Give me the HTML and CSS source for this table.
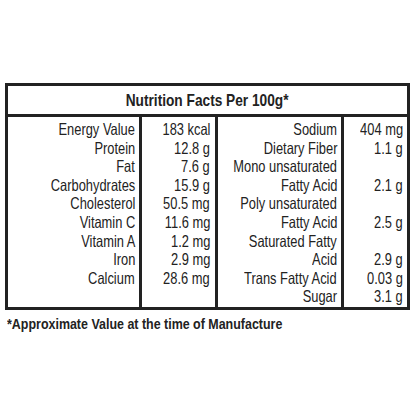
FILE: index.html
```html
<!DOCTYPE html>
<html lang="en">

<head>
    <meta charset="UTF-8">
    <meta name="viewport" content="width=device-width, initial-scale=1.0">
    <title>Nutrition Facts</title>
    <link rel="stylesheet" href="styles.css">
</head>

<body>
    <div class="label">
        <table class="facts">
            <colgroup>
                <col class="c1">
                <col class="c2">
                <col class="c3">
                <col class="c4">
            </colgroup>
            <thead>
                <tr>
                    <th colspan="4"><span>Nutrition Facts Per 100g*</span></th>
                </tr>
            </thead>
            <tbody>
                <tr><td><span>Energy Value</span></td><td><span>183 kcal</span></td><td><span>Sodium</span></td><td><span>404 mg</span></td></tr>
                <tr><td><span>Protein</span></td><td><span>12.8 g</span></td><td><span>Dietary Fiber</span></td><td><span>1.1 g</span></td></tr>
                <tr><td><span>Fat</span></td><td><span>7.6 g</span></td><td><span>Mono unsaturated</span></td><td></td></tr>
                <tr><td><span>Carbohydrates</span></td><td><span>15.9 g</span></td><td><span>Fatty Acid</span></td><td><span>2.1 g</span></td></tr>
                <tr><td><span>Cholesterol</span></td><td><span>50.5 mg</span></td><td><span>Poly unsaturated</span></td><td></td></tr>
                <tr><td><span>Vitamin C</span></td><td><span>11.6 mg</span></td><td><span>Fatty Acid</span></td><td><span>2.5 g</span></td></tr>
                <tr><td><span>Vitamin A</span></td><td><span>1.2 mg</span></td><td><span>Saturated Fatty</span></td><td></td></tr>
                <tr><td><span>Iron</span></td><td><span>2.9 mg</span></td><td><span>Acid</span></td><td><span>2.9 g</span></td></tr>
                <tr><td><span>Calcium</span></td><td><span>28.6 mg</span></td><td><span>Trans Fatty Acid</span></td><td><span>0.03 g</span></td></tr>
                <tr><td></td><td></td><td><span>Sugar</span></td><td><span>3.1 g</span></td></tr>
            </tbody>
        </table>
        <p class="note"><span>*Approximate Value at the time of Manufacture</span></p>
    </div>
</body>
</html>
```

FILE: styles.css
```css
html, body {
    margin: 0;
    background: #fff;
    color: #222;
    font-family: "Liberation Sans", Arial, sans-serif;
}

.label {
    padding: 83px 0 0 5px;
}

/* no narrow face installed, so squeeze the regular one */
.facts span,
.note span {
    display: inline-block;
    transform: scaleX(0.78);
    transform-origin: right center;
}

.facts {
    width: 405px;
    border: 3px solid #222;
    border-collapse: separate;
    border-spacing: 0;
    table-layout: fixed;
}

.c1 { width: 131px; }
.c2 { width: 76px; }
.c3 { width: 126px; }
.c4 { width: 66px; }

.facts th {
    height: 28px;
    padding: 0;
    border-bottom: 3px solid #222;
    font-size: 16.5px;
    font-weight: bold;
    text-align: center;
    white-space: nowrap;
}

.facts th span {
    transform: scaleX(0.83);
    transform-origin: center;
}

.facts td {
    padding: 0 4px 0 0;
    font-size: 16.5px;
    line-height: 18.6px;
    text-align: right;
    white-space: nowrap;
}

/* unscaled box is wider than the squeezed text; keep it right-aligned */
.facts td span {
    margin-left: -60px;
}

.facts td + td {
    border-left: 3px solid #222;
}

.facts td:nth-child(2) { padding-right: 5px; }

.facts tbody tr:first-child td { padding-top: 3px; }
.facts tbody tr:last-child td { padding-bottom: 1px; }

.note {
    margin: 5px 0 0 2px;
    font-size: 15px;
    font-weight: bold;
    white-space: nowrap;
}

.note span {
    transform: scaleX(0.83);
    transform-origin: left center;
}
```
